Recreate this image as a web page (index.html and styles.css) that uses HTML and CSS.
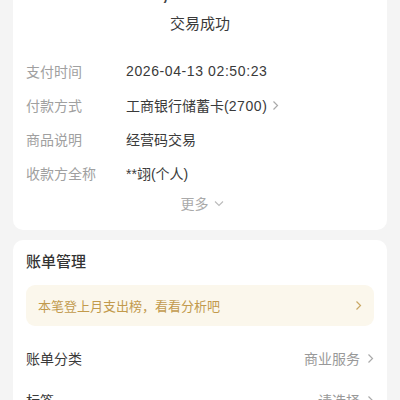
FILE: index.html
```html
<!DOCTYPE html>
<html>
<head>
    <title>交易详情</title>
    <link rel="stylesheet" href="styles.css">
</head>
<body>
    <div class="page">
        <div class="card detailCard">
            <div class="amount">-1,000.00</div>
            <div class="status">交易成功</div>

            <div class="rows">
                <div class="row">
                    <span class="label">支付时间</span>
                    <span class="value digits">2026-04-13 02:50:23</span>
                </div>
                <div class="row">
                    <span class="label">付款方式</span>
                    <span class="value">工商银行储蓄卡(<span class="digits">2700</span>)</span>
                    <svg class="arrow" width="7" height="11" viewBox="0 0 7 11"><path d="M1.5 1.5 L5.5 5.5 L1.5 9.5" fill="none" stroke="#aaa" stroke-width="1.2"/></svg>
                </div>
                <div class="row">
                    <span class="label">商品说明</span>
                    <span class="value">经营码交易</span>
                </div>
                <div class="row">
                    <span class="label">收款方全称</span>
                    <span class="value">**翊(个人)</span>
                </div>
            </div>

            <div class="more">
                更多
                <svg width="10" height="7" viewBox="0 0 10 7"><path d="M1 1.5 L5 5.5 L9 1.5" fill="none" stroke="#bbb" stroke-width="1.1"/></svg>
            </div>
        </div>

        <div class="card billCard">
            <h2 class="cardTitle">账单管理</h2>

            <div class="banner">
                <span>本笔登上月支出榜，看看分析吧</span>
                <svg width="7" height="11" viewBox="0 0 7 11"><path d="M1.5 1.5 L5.5 5.5 L1.5 9.5" fill="none" stroke="#c9a865" stroke-width="1.2"/></svg>
            </div>

            <div class="setting">
                <span class="settingName">账单分类</span>
                <span class="settingValue">商业服务</span>
                <svg width="7" height="11" viewBox="0 0 7 11"><path d="M1.5 1.5 L5.5 5.5 L1.5 9.5" fill="none" stroke="#aaa" stroke-width="1.2"/></svg>
            </div>
            <div class="setting">
                <span class="settingName">标签</span>
                <span class="settingValue">请选择</span>
                <svg width="7" height="11" viewBox="0 0 7 11"><path d="M1.5 1.5 L5.5 5.5 L1.5 9.5" fill="none" stroke="#aaa" stroke-width="1.2"/></svg>
            </div>
        </div>
    </div>
</body>
</html>
```

FILE: styles.css
```css
body {
    font-family: 'Liberation Sans', 'Noto Sans CJK SC', sans-serif;
    background-color: #f4f4f4;
    color: #333;
    margin: 0;
    padding: 0;
}

.page {
    padding: 0 13px;
}

.card {
    background-color: #fff;
    border-radius: 10px;
    padding: 0 13px;
}

.detailCard {
    padding-bottom: 14px;
}

.amount {
    margin-top: -32px;
    font-size: 32px;
    line-height: 40px;
    font-weight: 500;
    text-align: center;
    color: #444;
}

.status {
    margin-top: 6px;
    font-size: 15px;
    line-height: 20px;
    text-align: center;
    color: #3a3a3a;
}

.rows {
    margin-top: 20px;
}

.row {
    display: flex;
    align-items: center;
    height: 34px;
    font-size: 14px;
}

.label {
    width: 100px;
    flex-shrink: 0;
    color: #a0a0a0;
}

.value {
    color: #3a3a3a;
}

.digits {
    letter-spacing: 0.6px;
}

.arrow {
    margin-left: 5px;
}

.more {
    display: flex;
    justify-content: center;
    align-items: center;
    gap: 5px;
    height: 26px;
    font-size: 14px;
    color: #aaa;
    padding-left: 4px;
}

.billCard {
    margin-top: 10px;
    padding-top: 12px;
}

.cardTitle {
    margin: 0;
    font-size: 15px;
    line-height: 20px;
    font-weight: 500;
    color: #333;
}

.banner {
    display: flex;
    justify-content: space-between;
    align-items: center;
    height: 41px;
    margin-top: 13px;
    margin-bottom: 11px;
    padding: 0 12px;
    background-color: #fbf7ec;
    border-radius: 9px;
    font-size: 13px;
    color: #c29a4c;
}

.setting {
    display: flex;
    align-items: center;
    height: 42px;
    font-size: 14px;
}

.settingName {
    flex: 1;
    color: #3a3a3a;
}

.settingValue {
    color: #999;
    margin-right: 7px;
}
```
